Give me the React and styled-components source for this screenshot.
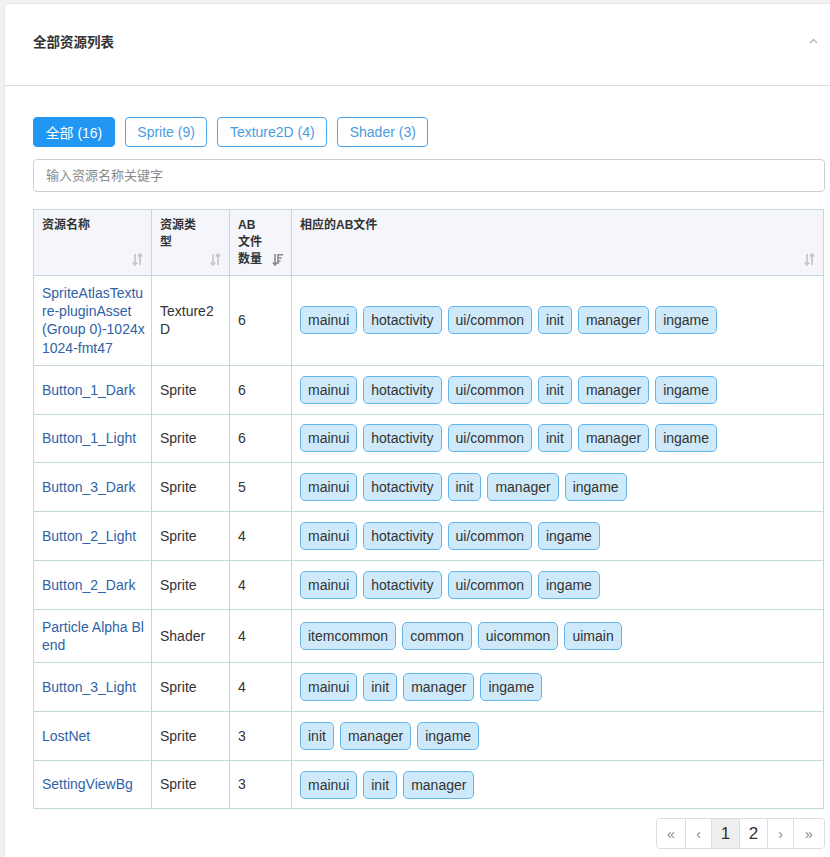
import React from 'react';
import styled, { createGlobalStyle } from 'styled-components';

const GlobalStyle = createGlobalStyle`
  body {
    margin: 0;
    background: #f1f1f1;
    overflow: hidden;
    font-family: "Liberation Sans", Arial, "Noto Sans CJK SC", sans-serif;
    color: #333;
  }
`;

const Page = styled.div`
  padding: 3px 0 0 4px;
`;

const Card = styled.div`
  width: 850px;
  box-sizing: border-box;
  background: #fff;
  border-radius: 4px;
  border: 1px solid #e6e6e6;
  height: 900px;
`;

const CardHeader = styled.div`
  display: flex;
  align-items: center;
  justify-content: space-between;
  height: 82px;
  box-sizing: border-box;
  padding: 0 28px 7px;
  border-bottom: 1px solid #dcdcdc;
`;

const Title = styled.div`
  font-size: 13.5px;
  font-weight: bold;
  color: #333;
`;

const Chevron = styled.div`
  margin-right: 7px;
  display: flex;
`;

const CardBody = styled.div`
  padding: 31px 28px 0;
`;

const FilterBar = styled.div`
  display: flex;
  gap: 10px;
`;

const FilterButton = styled.button`
  height: 30px;
  padding: 0 11.5px;
  font-family: inherit;
  font-size: 14px;
  border-radius: 4px;
  border: 1px solid ${p => (p.$active ? '#2196f3' : '#4fa6ec')};
  background: ${p => (p.$active ? '#2196f3' : '#fff')};
  color: ${p => (p.$active ? '#fff' : '#4b9be0')};
`;

const SearchInput = styled.input`
  display: block;
  width: 100%;
  box-sizing: border-box;
  height: 33px;
  margin-top: 12px;
  padding: 0 12px;
  border: 1px solid #cfcfcf;
  border-radius: 4px;
  font-family: inherit;
  font-size: 13px;
  color: #333;
  &::placeholder {
    color: #8a8a8a;
  }
`;

const Table = styled.table`
  width: 790px;
  margin-top: 17px;
  border-collapse: collapse;
  table-layout: fixed;
  font-size: 14px;
`;

const Th = styled.th`
  position: relative;
  height: 66px;
  padding: 7px 28px 0 8px;
  box-sizing: border-box;
  text-align: left;
  vertical-align: top;
  font-size: 12px;
  line-height: 17px;
  font-weight: bold;
  color: #333;
  background: #f4f6fb;
  border: 1px solid #c5d8d8;
`;

const SortIcon = styled.span`
  position: absolute;
  right: 8px;
  bottom: 9px;
  display: flex;
`;

const Td = styled.td`
  padding: 8px ${p => (p.$tight ? '6px' : '8px')} 8px 8px;
  vertical-align: middle;
  line-height: 18.2px;
  border: 1px solid #c5d8d8;
  word-break: break-all;
  color: #333;
`;

const NameLink = styled.a`
  color: #2f62a6;
  text-decoration: none;
`;

const TagList = styled.div`
  display: flex;
  flex-wrap: wrap;
  gap: 6px;
  padding: 1.9px 0;
`;

const Tag = styled.span`
  padding: 4px 7px;
  line-height: 18px;
  background: #cde9fa;
  border: 1px solid #63b6ec;
  border-radius: 5px;
  color: #333;
`;

const Pagination = styled.div`
  display: flex;
  justify-content: flex-end;
  margin-top: 9px;
`;

const PageList = styled.div`
  display: flex;
  border: 1px solid #ddd;
  border-radius: 4px;
  overflow: hidden;
`;

const PageItem = styled.span`
  display: flex;
  align-items: center;
  justify-content: center;
  height: 29px;
  width: ${p => p.$w}px;
  border-left: ${p => (p.$first ? 'none' : '1px solid #ddd')};
  background: ${p => (p.$current ? '#eeeeee' : '#fff')};
  color: ${p => (p.$muted ? '#888' : '#333')};
  font-size: ${p => (p.$muted ? '14px' : '17px')};
`;

const Unsorted = () => (
  <svg width="11" height="13" viewBox="0 0 11 13" fill="none" stroke="#c4c4c4" strokeWidth="1.6">
    <path d="M3 1v11M0.8 9.5L3 12l2.2-2.5" />
    <path d="M8 12V1M5.8 3.5L8 1l2.2 2.5" />
  </svg>
);

const SortedDesc = () => (
  <svg width="11" height="13" viewBox="0 0 11 13" fill="none" stroke="#8a8a8a" strokeWidth="1.6">
    <path d="M3 1v11M0.8 9.5L3 12l2.2-2.5" />
    <path d="M6 1.8h5M6 5h3.8M6 8.2h2.5M6 1v10" />
  </svg>
);

const rows = [
  { name: 'SpriteAtlasTexture-pluginAsset (Group 0)-1024x1024-fmt47', type: 'Texture2D', count: 6, tags: ['mainui', 'hotactivity', 'ui/common', 'init', 'manager', 'ingame'] },
  { name: 'Button_1_Dark', type: 'Sprite', count: 6, tags: ['mainui', 'hotactivity', 'ui/common', 'init', 'manager', 'ingame'] },
  { name: 'Button_1_Light', type: 'Sprite', count: 6, tags: ['mainui', 'hotactivity', 'ui/common', 'init', 'manager', 'ingame'] },
  { name: 'Button_3_Dark', type: 'Sprite', count: 5, tags: ['mainui', 'hotactivity', 'init', 'manager', 'ingame'] },
  { name: 'Button_2_Light', type: 'Sprite', count: 4, tags: ['mainui', 'hotactivity', 'ui/common', 'ingame'] },
  { name: 'Button_2_Dark', type: 'Sprite', count: 4, tags: ['mainui', 'hotactivity', 'ui/common', 'ingame'] },
  { name: 'Particle Alpha Blend', type: 'Shader', count: 4, tags: ['itemcommon', 'common', 'uicommon', 'uimain'] },
  { name: 'Button_3_Light', type: 'Sprite', count: 4, tags: ['mainui', 'init', 'manager', 'ingame'] },
  { name: 'LostNet', type: 'Sprite', count: 3, tags: ['init', 'manager', 'ingame'] },
  { name: 'SettingViewBg', type: 'Sprite', count: 3, tags: ['mainui', 'init', 'manager'] },
];

const filters = [
  { label: '全部 (16)', active: true },
  { label: 'Sprite (9)' },
  { label: 'Texture2D (4)' },
  { label: 'Shader (3)' },
];

const pages = [
  { label: '«', w: 28, muted: true },
  { label: '‹', w: 25, muted: true },
  { label: '1', w: 27, current: true },
  { label: '2', w: 27 },
  { label: '›', w: 25, muted: true },
  { label: '»', w: 30, muted: true },
];

export default function App() {
  return (
    <Page>
      <GlobalStyle />
      <Card>
        <CardHeader>
          <Title>全部资源列表</Title>
          <Chevron>
            <svg width="9" height="6" viewBox="0 0 9 6" fill="none" stroke="#b5b5b5" strokeWidth="1.4">
              <path d="M1 5l3.5-3.5L8 5" />
            </svg>
          </Chevron>
        </CardHeader>
        <CardBody>
          <FilterBar>
            {filters.map(f => (
              <FilterButton key={f.label} $active={f.active}>{f.label}</FilterButton>
            ))}
          </FilterBar>
          <SearchInput placeholder="输入资源名称关键字" />
          <Table>
            <colgroup>
              <col style={{ width: 118 }} />
              <col style={{ width: 78 }} />
              <col style={{ width: 62 }} />
              <col style={{ width: 532 }} />
            </colgroup>
            <thead>
              <tr>
                <Th>资源名称<SortIcon><Unsorted /></SortIcon></Th>
                <Th>资源类型<SortIcon><Unsorted /></SortIcon></Th>
                <Th>AB 文件数量<SortIcon><SortedDesc /></SortIcon></Th>
                <Th>相应的AB文件<SortIcon><Unsorted /></SortIcon></Th>
              </tr>
            </thead>
            <tbody>
              {rows.map(r => (
                <tr key={r.name}>
                  <Td $tight><NameLink href="#">{r.name}</NameLink></Td>
                  <Td>{r.type}</Td>
                  <Td>{r.count}</Td>
                  <Td>
                    <TagList>
                      {r.tags.map(t => <Tag key={t}>{t}</Tag>)}
                    </TagList>
                  </Td>
                </tr>
              ))}
            </tbody>
          </Table>
          <Pagination>
            <PageList>
              {pages.map((p, i) => (
                <PageItem key={p.label} $w={p.w} $first={i === 0} $current={p.current} $muted={p.muted}>
                  {p.label}
                </PageItem>
              ))}
            </PageList>
          </Pagination>
        </CardBody>
      </Card>
    </Page>
  );
}
